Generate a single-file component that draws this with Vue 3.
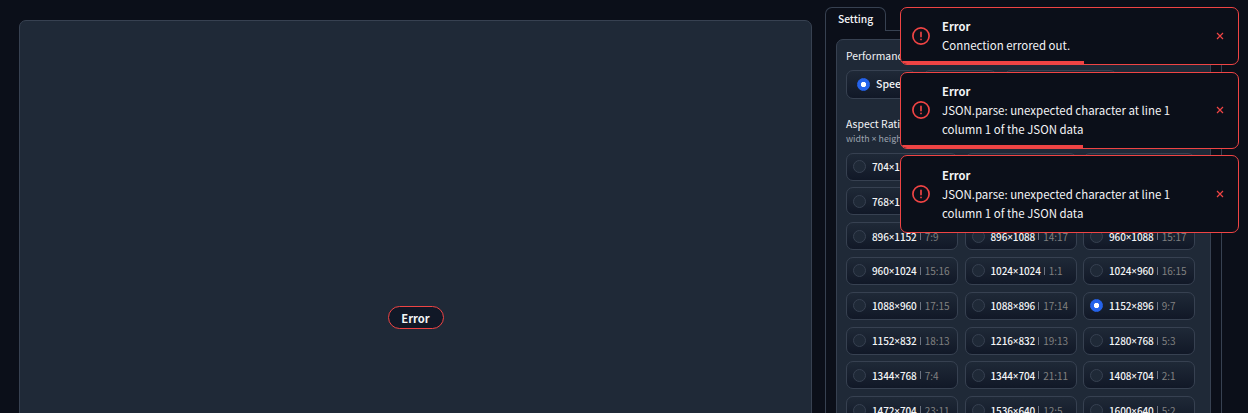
<script setup>
const speeds = [
  { label: 'Speed', on: true },
  { label: 'Quality', on: false },
  { label: 'Extreme Speed', on: false },
]
const ratios = [
  ['704', '1408', '1:2'], ['704', '1344', '11:21'], ['768', '1344', '4:7'],
  ['768', '1280', '3:5'], ['832', '1216', '13:19'], ['832', '1152', '13:18'],
  ['896', '1152', '7:9'], ['896', '1088', '14:17'], ['960', '1088', '15:17'],
  ['960', '1024', '15:16'], ['1024', '1024', '1:1'], ['1024', '960', '16:15'],
  ['1088', '960', '17:15'], ['1088', '896', '17:14'], ['1152', '896', '9:7'],
  ['1152', '832', '18:13'], ['1216', '832', '19:13'], ['1280', '768', '5:3'],
  ['1344', '768', '7:4'], ['1344', '704', '21:11'], ['1408', '704', '2:1'],
  ['1472', '704', '23:11'], ['1536', '640', '12:5'], ['1600', '640', '5:2'],
]
const selected = '9:7'
const toasts = [
  { lines: ['Connection errored out.'], left: 183 },
  { lines: ['JSON.parse: unexpected character at line 1', 'column 1 of the JSON data'], left: 182 },
  { lines: ['JSON.parse: unexpected character at line 1', 'column 1 of the JSON data'], left: 0 },
]
</script>

<template>
  <div class="page">
    <section class="preview"><span class="status">Error</span></section>

    <aside class="side">
      <div class="tabs"><div class="tab">Setting</div><div class="rule"></div></div>
      <div class="tabbody">
        <div class="panel">
          <div class="title">Performance</div>
          <div class="speeds">
            <label v-for="s in speeds" :key="s.label" class="option">
              <i class="dot" :class="{ on: s.on }"></i><span>{{ s.label }}</span>
            </label>
          </div>
          <div class="title second">Aspect Ratios</div>
          <div class="hint">width <span class="times">×</span> height</div>
          <div class="grid">
            <label v-for="r in ratios" :key="r[0] + r[1]" class="option small">
              <i class="dot" :class="{ on: r[2] === selected }"></i>
              <span class="dims">{{ r[0] }}<span class="times">×</span>{{ r[1] }}</span>
              <i class="bar"></i>
              <span class="ratio">{{ r[2] }}</span>
            </label>
          </div>
        </div>
      </div>
    </aside>

    <div class="toasts">
      <div v-for="(t, i) in toasts" :key="i" class="toast">
        <svg class="alert" viewBox="0 0 20 20" fill="none" stroke="#ef4444" stroke-width="1.7" stroke-linecap="round">
          <circle cx="10" cy="10" r="8.1" />
          <path d="M10 6.4v4.2M10 13.3v.1" />
        </svg>
        <div class="msg">
          <div class="head">Error</div>
          <div v-for="l in t.lines" :key="l">{{ l }}</div>
        </div>
        <svg class="close" viewBox="0 0 8 8" stroke="#ef4444" stroke-width="1.2"><path d="M1 1l6 6M7 1l-6 6" /></svg>
        <div class="timer" :style="{ width: t.left + 'px' }"></div>
      </div>
    </div>
  </div>
</template>

<style>
html, body { background: #0b0f19; overflow: hidden; }
</style>

<style scoped>
* { box-sizing: border-box; }
.page {
  position: relative;
  display: flex;
  height: 413px;
  overflow: hidden;
  padding-left: 19px;
  background: #0b0f19;
  color: #f3f4f6;
  font-family: "Noto Sans CJK KR", "Noto Sans CJK SC", "Noto Sans", sans-serif;
  font-size: 10.5px;
  font-weight: 500;
  white-space: nowrap;
}
.preview {
  display: flex;
  justify-content: center;
  align-items: flex-start;
  width: 793px;
  height: 420px;
  margin-top: 20px;
  padding-top: 285px;
  border: 1px solid #374151;
  border-radius: 7px;
  background: #1f2937;
}
.status {
  width: 56px;
  height: 23px;
  border: 1px solid #ef4444;
  border-radius: 12px;
  background: #111827;
  font-size: 11.2px;
  font-weight: 700;
  line-height: 23px;
  text-align: center;
}
.side { width: 397px; margin: 7px 0 0 13px; }
.tabs { display: flex; height: 24px; }
.tab {
  width: 61px;
  border: 1px solid #374151;
  border-bottom: 0;
  border-radius: 7px 7px 0 0;
  font-size: 10.3px;
  line-height: 22px;
  text-align: center;
}
.rule { flex: 1; border-bottom: 1px solid #374151; }
.tabbody {
  height: 420px;
  padding: 8px 10px;
  border: solid #374151;
  border-width: 0 1px;
}
.panel {
  height: 420px;
  padding: 9px 9px;
  border: 1px solid #374151;
  border-radius: 7px;
  background: #1f2937;
}
.title { height: 14px; font-size: 10.4px; font-weight: 400; line-height: 13px; }
.speeds { display: flex; gap: 7px; margin-top: 7px; }
.speeds .option { height: 29px; padding-right: 7px; }
.speeds .option span { margin-top: -2px; }
.second { margin-top: 18px; }
.hint {
  height: 14px;
  margin-top: 1px;
  color: #9ca3af;
  font-size: 8.8px;
  font-weight: 400;
  line-height: 14px;
}
.grid {
  display: grid;
  grid-template-columns: repeat(3, 112px);
  column-gap: 6.5px;
  row-gap: 6.8px;
  margin-top: 6.6px;
}
.option {
  display: flex;
  align-items: center;
  padding-left: 10px;
  border: 1px solid #374151;
  border-radius: 7px;
  background: linear-gradient(#1f2937, #111827);
}
.small { height: 28px; padding-left: 6px; font-size: 10px; }
.dot {
  flex: none;
  width: 13px;
  height: 13px;
  margin-right: 6px;
  border: 1px solid #374151;
  border-radius: 50%;
  background: #1f2937;
}
.dot.on { border-color: #2563eb; background: radial-gradient(circle, #fff 2.3px, #2563eb 3px); }
.dims { letter-spacing: -0.12px; }
.times { font-family: "Noto Sans", sans-serif; line-height: 1; }
.bar { width: 1px; height: 8px; margin: 0 4px 0 3px; background: #6b7280; }
.ratio { color: #808080; font-weight: 400; }
.toasts {
  position: absolute;
  top: 7px;
  left: 900px;
  display: flex;
  flex-direction: column;
  gap: 6px;
  width: 339px;
}
.toast {
  position: relative;
  display: flex;
  align-items: center;
  overflow: hidden;
  padding: 9px 14px 9px 10px;
  border: 1px solid #ef4444;
  border-radius: 7px;
  background: #0b0f19;
  font-size: 11.46px;
  font-weight: 400;
  line-height: 19px;
}
.toast:first-child { margin-bottom: 1px; }
.toast:last-child { padding-top: 10px; }
.head { font-size: 11.2px; font-weight: 700; }
.alert { width: 20px; height: 20px; }
.toast:not(:first-child) .alert,
.toast:not(:first-child) .close { margin-bottom: 2px; }
.msg { flex: 1; margin-left: 11px; }
.close { width: 8px; height: 8px; }
.timer { position: absolute; left: 0; bottom: 0; height: 3px; background: #ef4444; }
</style>
